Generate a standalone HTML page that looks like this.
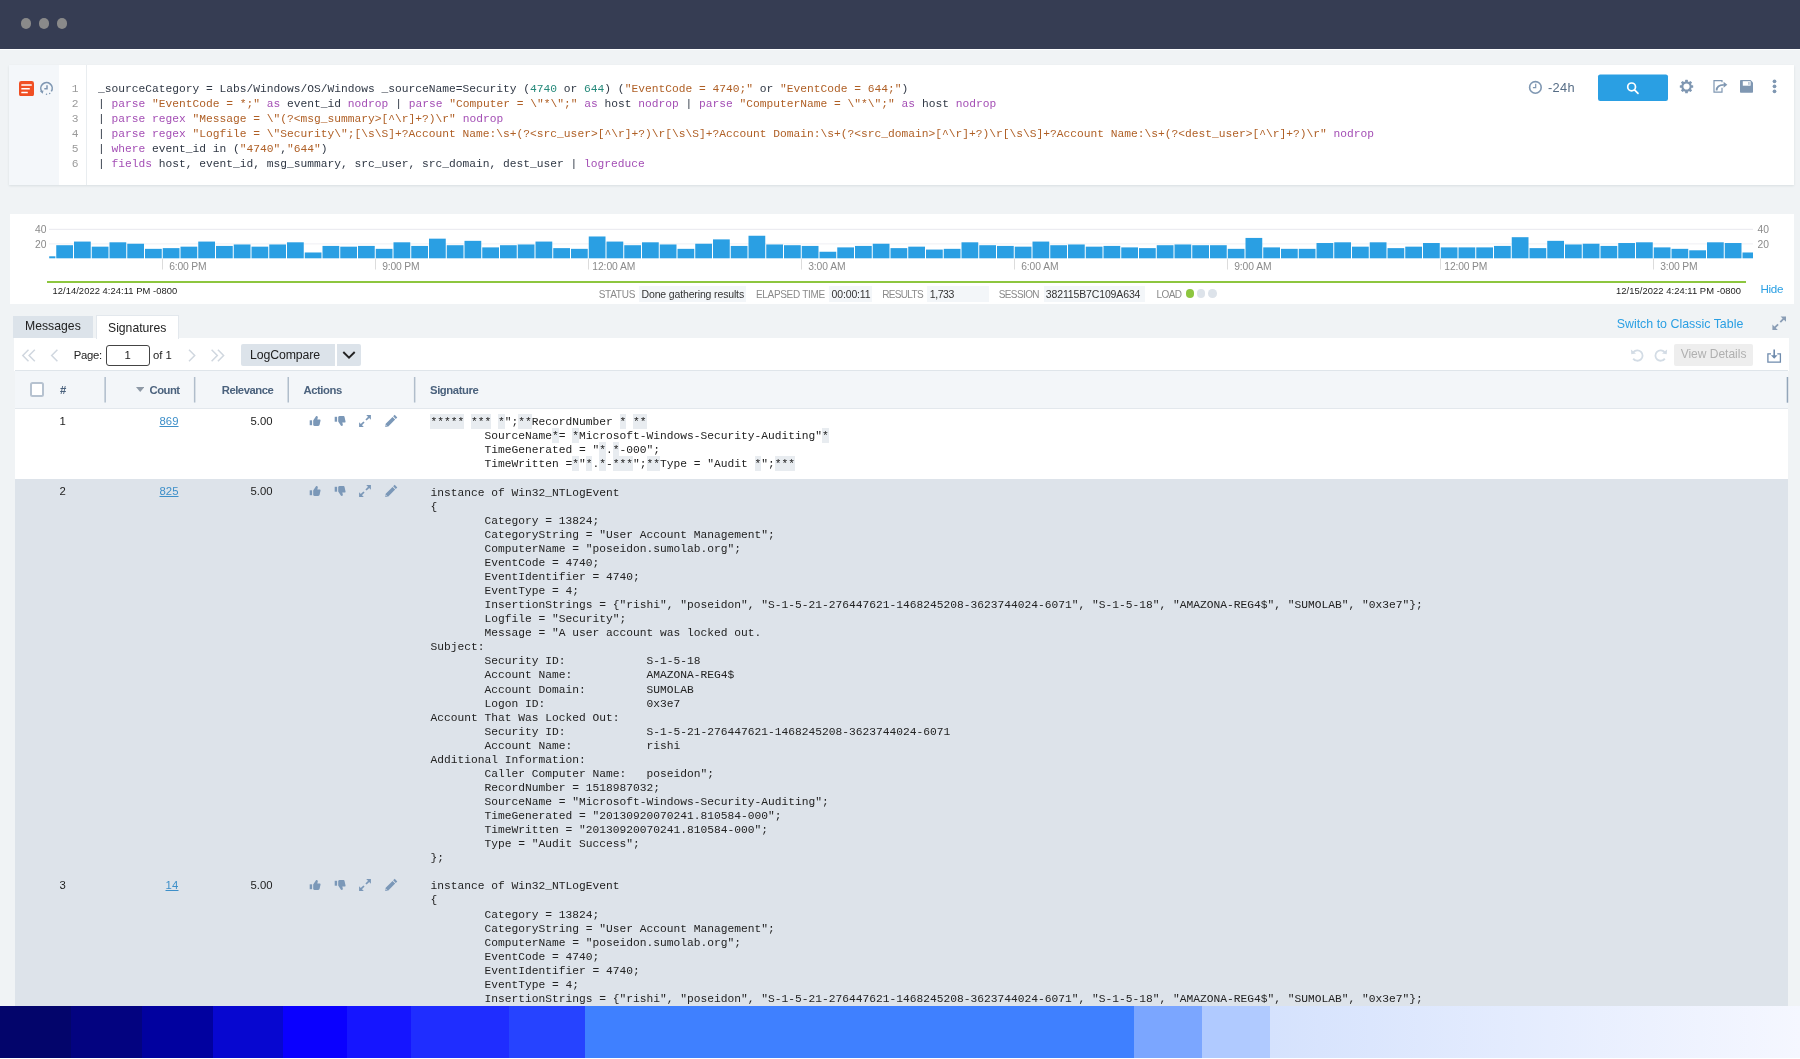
<!DOCTYPE html>
<html lang="en"><head><meta charset="utf-8"><title>Sumo Logic - LogReduce Signatures</title>
<style>
*{box-sizing:border-box}
html,body{margin:0;padding:0}
body{width:1800px;height:1059px;overflow:hidden;background:#f0f3f5;font-family:"Liberation Sans", sans-serif;position:relative;will-change:transform}
.abs{position:absolute}
.t{position:absolute;white-space:pre;line-height:1;}
#top{left:0;top:0;width:1800px;height:48.6px;background:#363d53}
#topl{left:0;top:48.6px;width:1800px;height:1.5px;background:#fdfefe}
.dot{position:absolute;width:10.4px;height:10.4px;border-radius:50%;background:#8a8a8a;top:18.3px}
#qp{left:9.3px;top:65.3px;width:1784.4px;height:119.4px;background:#fff;box-shadow:0 1px 2px rgba(60,80,100,.12)}
#qg{left:0;top:0;width:49.7px;height:100%;background:#f4f7fa}
#qline{left:76.8px;top:0;width:1px;height:100%;background:#e9edf0}
#qcode{left:0;top:16.5px;width:1500px;font-family:"Liberation Mono", monospace;font-size:11.25px;line-height:15px;color:#303845}
.ql{height:15px;padding-left:88.7px;position:relative;white-space:pre}
.ln{position:absolute;left:40px;width:29.2px;text-align:right;color:#9a9a9a}
.k{color:#a44fb5} .s{color:#af5f25} .n{color:#25897a}
#cp{left:10px;top:214px;width:1783.5px;height:90.2px;background:#fff}
.sv{position:absolute;top:286px;height:16.2px;background:#f3f6f9}
.ld{position:absolute;top:289.2px;width:8.6px;height:8.6px;border-radius:50%}
#tab1b{left:13px;top:316px;width:80px;height:22px;background:#dce3ea}
#tab2b{left:96.2px;top:315px;width:82.4px;height:24px;background:#fff;border:1px solid #e3e8ed;border-bottom:none}
#tb{left:13.7px;top:338px;width:1775.3px;height:32.5px;background:#fff}
#th{left:14.8px;top:370.2px;width:1773.4px;height:38.8px;background:#f3f6f9;border-top:1px solid #dfe5ea;border-bottom:1px solid #e3e8ed}
.sep{position:absolute;top:377px;width:1.4px;height:25.5px;background:#b2bfcd}
#r1{left:14.8px;top:409px;width:1773.4px;height:69.7px;background:#fff}
#r2{left:14.8px;top:478.7px;width:1773.4px;height:527.5px;background:#dde3ea}
.sig{position:absolute;left:430.4px;margin:0;font-family:"Liberation Mono", monospace;font-size:11.25px;line-height:14.0625px;color:#222;tab-size:8;white-space:pre}
.w{background:#e8ecf0;padding:1.6px 0 0.8px}
#pin{left:105.5px;top:345px;width:44.5px;height:20.8px;border:1px solid #444;border-radius:3px;background:#fff}
#lcb{left:241px;top:344.2px;width:93.5px;height:21.8px;background:#dce3ea;border-radius:2px 0 0 2px}
#lcd{left:337px;top:344.2px;width:23.8px;height:21.8px;background:#dce3ea;border-radius:0 2px 2px 0}
#vdb{left:1674px;top:344px;width:79.3px;height:22px;background:#eeeeee;border-radius:2px}
#cb{left:30px;top:382.4px;width:14.4px;height:14.6px;border:2px solid #b6c2d0;border-radius:2.5px;background:#fff}
#sb{left:1598px;top:74.7px;width:70px;height:26px;background:#2a9fe3;border-radius:2px}
.strip{position:absolute;top:1006px;height:52px}
</style></head>
<body>
<div id="top" class="abs"><div class="dot" style="left:20.9px"></div><div class="dot" style="left:38.7px"></div><div class="dot" style="left:56.5px"></div></div>
<div id="topl" class="abs"></div>
<div id="qp" class="abs"><div id="qg" class="abs"></div><div id="qline" class="abs"></div>
<div id="qcode" class="abs">
<div class="ql"><span class="ln">1</span>_sourceCategory = Labs/Windows/OS/Windows _sourceName=Security (<span class="n">4740</span> or <span class="n">644</span>) (<span class="s">&quot;EventCode = 4740;&quot;</span> or <span class="s">&quot;EventCode = 644;&quot;</span>)</div>
<div class="ql"><span class="ln">2</span>| <span class="k">parse</span> <span class="s">&quot;EventCode = *;&quot;</span> <span class="k">as</span> event_id <span class="k">nodrop</span> | <span class="k">parse</span> <span class="s">&quot;Computer = \&quot;*\&quot;;&quot;</span> <span class="k">as</span> host <span class="k">nodrop</span> | <span class="k">parse</span> <span class="s">&quot;ComputerName = \&quot;*\&quot;;&quot;</span> <span class="k">as</span> host <span class="k">nodrop</span></div>
<div class="ql"><span class="ln">3</span>| <span class="k">parse</span> <span class="k">regex</span> <span class="s">&quot;Message = \&quot;(?&lt;msg_summary&gt;[^\r]+?)\r&quot;</span> <span class="k">nodrop</span></div>
<div class="ql"><span class="ln">4</span>| <span class="k">parse</span> <span class="k">regex</span> <span class="s">&quot;Logfile = \&quot;Security\&quot;;[\s\S]+?Account Name:\s+(?&lt;src_user&gt;[^\r]+?)\r[\s\S]+?Account Domain:\s+(?&lt;src_domain&gt;[^\r]+?)\r[\s\S]+?Account Name:\s+(?&lt;dest_user&gt;[^\r]+?)\r&quot;</span> <span class="k">nodrop</span></div>
<div class="ql"><span class="ln">5</span>| <span class="k">where</span> event_id in (<span class="s">&quot;4740&quot;</span>,<span class="s">&quot;644&quot;</span>)</div>
<div class="ql"><span class="ln">6</span>| <span class="k">fields</span> host, event_id, msg_summary, src_user, src_domain, dest_user | <span class="k">logreduce</span></div>
</div></div>
<svg class="abs" style="left:1590px;top:70px" width="90" height="36" viewBox="1590 70 90 36"><rect x="1598" y="74.4" width="70" height="26.5" rx="2.2" fill="#2a9fe3"/></svg>
<div id="cp" class="abs"></div>
<svg class="abs" style="left:0;top:0" width="1800" height="320" viewBox="0 0 1800 320"><rect x="49" y="228.8" width="1704" height="1" fill="#e8e8ee"/><rect x="49" y="243.4" width="1704" height="1" fill="#efeff3"/><rect x="49.2" y="256.30" width="6.2" height="2" fill="#2a9fe3"/><rect x="56.25" y="245.21" width="16.75" height="13.10" fill="#2a9fe3"/><rect x="74.00" y="241.57" width="16.75" height="16.73" fill="#2a9fe3"/><rect x="91.75" y="246.66" width="16.75" height="11.64" fill="#2a9fe3"/><rect x="109.50" y="242.30" width="16.75" height="16.01" fill="#2a9fe3"/><rect x="127.25" y="243.75" width="16.75" height="14.55" fill="#2a9fe3"/><rect x="145.00" y="248.84" width="16.75" height="9.46" fill="#2a9fe3"/><rect x="162.75" y="248.12" width="16.75" height="10.19" fill="#2a9fe3"/><rect x="180.50" y="246.66" width="16.75" height="11.64" fill="#2a9fe3"/><rect x="198.25" y="241.57" width="16.75" height="16.73" fill="#2a9fe3"/><rect x="216.00" y="245.93" width="16.75" height="12.37" fill="#2a9fe3"/><rect x="233.75" y="244.48" width="16.75" height="13.82" fill="#2a9fe3"/><rect x="251.50" y="246.66" width="16.75" height="11.64" fill="#2a9fe3"/><rect x="269.25" y="244.48" width="16.75" height="13.82" fill="#2a9fe3"/><rect x="287.00" y="242.30" width="16.75" height="16.01" fill="#2a9fe3"/><rect x="304.75" y="252.48" width="16.75" height="5.82" fill="#2a9fe3"/><rect x="322.50" y="245.93" width="16.75" height="12.37" fill="#2a9fe3"/><rect x="340.25" y="246.66" width="16.75" height="11.64" fill="#2a9fe3"/><rect x="358.00" y="245.93" width="16.75" height="12.37" fill="#2a9fe3"/><rect x="375.75" y="248.84" width="16.75" height="9.46" fill="#2a9fe3"/><rect x="393.50" y="242.30" width="16.75" height="16.01" fill="#2a9fe3"/><rect x="411.25" y="245.93" width="16.75" height="12.37" fill="#2a9fe3"/><rect x="429.00" y="238.66" width="16.75" height="19.64" fill="#2a9fe3"/><rect x="446.75" y="245.21" width="16.75" height="13.10" fill="#2a9fe3"/><rect x="464.50" y="240.84" width="16.75" height="17.46" fill="#2a9fe3"/><rect x="482.25" y="247.39" width="16.75" height="10.91" fill="#2a9fe3"/><rect x="500.00" y="245.21" width="16.75" height="13.10" fill="#2a9fe3"/><rect x="517.75" y="244.48" width="16.75" height="13.82" fill="#2a9fe3"/><rect x="535.50" y="241.57" width="16.75" height="16.73" fill="#2a9fe3"/><rect x="553.25" y="248.12" width="16.75" height="10.19" fill="#2a9fe3"/><rect x="571.00" y="248.84" width="16.75" height="9.46" fill="#2a9fe3"/><rect x="588.75" y="236.48" width="16.75" height="21.83" fill="#2a9fe3"/><rect x="606.50" y="241.57" width="16.75" height="16.73" fill="#2a9fe3"/><rect x="624.25" y="245.21" width="16.75" height="13.10" fill="#2a9fe3"/><rect x="642.00" y="242.30" width="16.75" height="16.01" fill="#2a9fe3"/><rect x="659.75" y="244.48" width="16.75" height="13.82" fill="#2a9fe3"/><rect x="677.50" y="248.84" width="16.75" height="9.46" fill="#2a9fe3"/><rect x="695.25" y="243.75" width="16.75" height="14.55" fill="#2a9fe3"/><rect x="713.00" y="239.39" width="16.75" height="18.91" fill="#2a9fe3"/><rect x="730.75" y="245.93" width="16.75" height="12.37" fill="#2a9fe3"/><rect x="748.50" y="235.75" width="16.75" height="22.55" fill="#2a9fe3"/><rect x="766.25" y="244.48" width="16.75" height="13.82" fill="#2a9fe3"/><rect x="784.00" y="245.21" width="16.75" height="13.10" fill="#2a9fe3"/><rect x="801.75" y="245.93" width="16.75" height="12.37" fill="#2a9fe3"/><rect x="819.50" y="251.75" width="16.75" height="6.55" fill="#2a9fe3"/><rect x="837.25" y="247.39" width="16.75" height="10.91" fill="#2a9fe3"/><rect x="855.00" y="245.93" width="16.75" height="12.37" fill="#2a9fe3"/><rect x="872.75" y="243.75" width="16.75" height="14.55" fill="#2a9fe3"/><rect x="890.50" y="248.12" width="16.75" height="10.19" fill="#2a9fe3"/><rect x="908.25" y="246.66" width="16.75" height="11.64" fill="#2a9fe3"/><rect x="926.00" y="249.57" width="16.75" height="8.73" fill="#2a9fe3"/><rect x="943.75" y="248.84" width="16.75" height="9.46" fill="#2a9fe3"/><rect x="961.50" y="242.30" width="16.75" height="16.01" fill="#2a9fe3"/><rect x="979.25" y="245.21" width="16.75" height="13.10" fill="#2a9fe3"/><rect x="997.00" y="245.93" width="16.75" height="12.37" fill="#2a9fe3"/><rect x="1014.75" y="246.66" width="16.75" height="11.64" fill="#2a9fe3"/><rect x="1032.50" y="241.57" width="16.75" height="16.73" fill="#2a9fe3"/><rect x="1050.25" y="245.21" width="16.75" height="13.10" fill="#2a9fe3"/><rect x="1068.00" y="244.48" width="16.75" height="13.82" fill="#2a9fe3"/><rect x="1085.75" y="246.66" width="16.75" height="11.64" fill="#2a9fe3"/><rect x="1103.50" y="245.93" width="16.75" height="12.37" fill="#2a9fe3"/><rect x="1121.25" y="247.39" width="16.75" height="10.91" fill="#2a9fe3"/><rect x="1139.00" y="248.12" width="16.75" height="10.19" fill="#2a9fe3"/><rect x="1156.75" y="245.21" width="16.75" height="13.10" fill="#2a9fe3"/><rect x="1174.50" y="244.48" width="16.75" height="13.82" fill="#2a9fe3"/><rect x="1192.25" y="245.21" width="16.75" height="13.10" fill="#2a9fe3"/><rect x="1210.00" y="245.21" width="16.75" height="13.10" fill="#2a9fe3"/><rect x="1227.75" y="248.84" width="16.75" height="9.46" fill="#2a9fe3"/><rect x="1245.50" y="237.93" width="16.75" height="20.37" fill="#2a9fe3"/><rect x="1263.25" y="247.39" width="16.75" height="10.91" fill="#2a9fe3"/><rect x="1281.00" y="248.84" width="16.75" height="9.46" fill="#2a9fe3"/><rect x="1298.75" y="248.84" width="16.75" height="9.46" fill="#2a9fe3"/><rect x="1316.50" y="243.02" width="16.75" height="15.28" fill="#2a9fe3"/><rect x="1334.25" y="242.30" width="16.75" height="16.01" fill="#2a9fe3"/><rect x="1352.00" y="246.66" width="16.75" height="11.64" fill="#2a9fe3"/><rect x="1369.75" y="242.30" width="16.75" height="16.01" fill="#2a9fe3"/><rect x="1387.50" y="248.12" width="16.75" height="10.19" fill="#2a9fe3"/><rect x="1405.25" y="246.66" width="16.75" height="11.64" fill="#2a9fe3"/><rect x="1423.00" y="243.02" width="16.75" height="15.28" fill="#2a9fe3"/><rect x="1440.75" y="247.39" width="16.75" height="10.91" fill="#2a9fe3"/><rect x="1458.50" y="247.39" width="16.75" height="10.91" fill="#2a9fe3"/><rect x="1476.25" y="247.39" width="16.75" height="10.91" fill="#2a9fe3"/><rect x="1494.00" y="245.93" width="16.75" height="12.37" fill="#2a9fe3"/><rect x="1511.75" y="237.20" width="16.75" height="21.10" fill="#2a9fe3"/><rect x="1529.50" y="248.12" width="16.75" height="10.19" fill="#2a9fe3"/><rect x="1547.25" y="240.84" width="16.75" height="17.46" fill="#2a9fe3"/><rect x="1565.00" y="244.48" width="16.75" height="13.82" fill="#2a9fe3"/><rect x="1582.75" y="243.75" width="16.75" height="14.55" fill="#2a9fe3"/><rect x="1600.50" y="245.93" width="16.75" height="12.37" fill="#2a9fe3"/><rect x="1618.25" y="243.02" width="16.75" height="15.28" fill="#2a9fe3"/><rect x="1636.00" y="242.30" width="16.75" height="16.01" fill="#2a9fe3"/><rect x="1653.75" y="247.39" width="16.75" height="10.91" fill="#2a9fe3"/><rect x="1671.50" y="248.84" width="16.75" height="9.46" fill="#2a9fe3"/><rect x="1689.25" y="250.30" width="16.75" height="8.00" fill="#2a9fe3"/><rect x="1707.00" y="242.30" width="16.75" height="16.01" fill="#2a9fe3"/><rect x="1724.75" y="243.02" width="16.75" height="15.28" fill="#2a9fe3"/><rect x="1742.50" y="252.48" width="10.50" height="5.82" fill="#2a9fe3"/><rect x="162.00" y="258.5" width="1" height="11" fill="#dcdcdc"/><rect x="375.00" y="258.5" width="1" height="11" fill="#dcdcdc"/><rect x="588.00" y="258.5" width="1" height="11" fill="#dcdcdc"/><rect x="801.00" y="258.5" width="1" height="11" fill="#dcdcdc"/><rect x="1014.00" y="258.5" width="1" height="11" fill="#dcdcdc"/><rect x="1227.00" y="258.5" width="1" height="11" fill="#dcdcdc"/><rect x="1440.00" y="258.5" width="1" height="11" fill="#dcdcdc"/><rect x="1653.00" y="258.5" width="1" height="11" fill="#dcdcdc"/><rect x="47" y="281" width="1699" height="2" fill="#8dc63f"/></svg>
<div class="sv" style="left:639.2px;width:106.8px"></div>
<div class="sv" style="left:829.2px;width:43.1px"></div>
<div class="sv" style="left:927.4px;width:61.6px"></div>
<div class="sv" style="left:1043.5px;width:101.1px"></div>
<div class="ld" style="left:1185.6px;background:#8dc63f"></div>
<div class="ld" style="left:1196.8px;background:#dde3ea"></div>
<div class="ld" style="left:1208px;background:#dde3ea"></div>
<div id="tab1b" class="abs"></div><div id="tb" class="abs"></div><div id="tab2b" class="abs"></div>
<div id="th" class="abs"></div>
<svg class="abs" style="left:0;top:370px" width="1800" height="40" viewBox="0 370 1800 40"><g fill="#b0bdcb"><rect x="104.4" y="377" width="1.5" height="25.5"/><rect x="193.9" y="377" width="1.5" height="25.5"/><rect x="287.5" y="377" width="1.5" height="25.5"/><rect x="413.9" y="377" width="1.5" height="25.5"/></g><rect x="1786.7" y="377" width="1.5" height="25.7" fill="#93a5b9"/></svg>
<div id="r1" class="abs"></div><div id="r2" class="abs"></div>
<div id="pin" class="abs"></div><div id="lcb" class="abs"></div><div id="lcd" class="abs"></div><div id="vdb" class="abs"></div><div id="cb" class="abs"></div>
<pre id="sg1" class="sig" style="top:414.90px"><span class="w">*****</span> <span class="w">***</span> <span class="w">*</span>&quot;;<span class="w">**</span>RecordNumber <span class="w">*</span> <span class="w">**</span>
	SourceName<span class="w">*</span>= <span class="w">*</span>Microsoft-Windows-Security-Auditing&quot;<span class="w">*</span>
	TimeGenerated = &quot;<span class="w">*</span>.<span class="w">*</span>-000&quot;;
	TimeWritten =<span class="w">*</span>&quot;<span class="w">*</span>.<span class="w">*</span>-<span class="w">***</span>&quot;;<span class="w">**</span>Type = &quot;Audit <span class="w">*</span>&quot;;<span class="w">***</span></pre>
<pre id="sg2" class="sig" style="top:485.65px">instance of Win32_NTLogEvent
{
	Category = 13824;
	CategoryString = &quot;User Account Management&quot;;
	ComputerName = &quot;poseidon.sumolab.org&quot;;
	EventCode = 4740;
	EventIdentifier = 4740;
	EventType = 4;
	InsertionStrings = {&quot;rishi&quot;, &quot;poseidon&quot;, &quot;S-1-5-21-276447621-1468245208-3623744024-6071&quot;, &quot;S-1-5-18&quot;, &quot;AMAZONA-REG4$&quot;, &quot;SUMOLAB&quot;, &quot;0x3e7&quot;};
	Logfile = &quot;Security&quot;;
	Message = &quot;A user account was locked out.
Subject:
	Security ID:		S-1-5-18
	Account Name:		AMAZONA-REG4$
	Account Domain:		SUMOLAB
	Logon ID:		0x3e7
Account That Was Locked Out:
	Security ID:		S-1-5-21-276447621-1468245208-3623744024-6071
	Account Name:		rishi
Additional Information:
	Caller Computer Name:	poseidon&quot;;
	RecordNumber = 1518987032;
	SourceName = &quot;Microsoft-Windows-Security-Auditing&quot;;
	TimeGenerated = &quot;20130920070241.810584-000&quot;;
	TimeWritten = &quot;20130920070241.810584-000&quot;;
	Type = &quot;Audit Success&quot;;
};</pre>
<pre id="sg3" class="sig" style="top:879.40px">instance of Win32_NTLogEvent
{
	Category = 13824;
	CategoryString = &quot;User Account Management&quot;;
	ComputerName = &quot;poseidon.sumolab.org&quot;;
	EventCode = 4740;
	EventIdentifier = 4740;
	EventType = 4;
	InsertionStrings = {&quot;rishi&quot;, &quot;poseidon&quot;, &quot;S-1-5-21-276447621-1468245208-3623744024-6071&quot;, &quot;S-1-5-18&quot;, &quot;AMAZONA-REG4$&quot;, &quot;SUMOLAB&quot;, &quot;0x3e7&quot;};</pre>
<svg class="abs" style="left:307.50px;top:413.80px" width="14" height="14" viewBox="0 0 14 14" fill="#7b98b8"><rect x="1.7" y="6.3" width="2.4" height="4.9" /><path d="M5.2 6.6 L8 2.2 C9.2 1.7 10 2.6 9.8 3.6 L9.3 5.5 L11.6 5.5 C12.4 5.5 12.7 6.1 12.5 6.8 L11.6 10.8 C11.4 11.6 11 11.9 10.2 11.9 L6.4 11.9 L5.2 11.3 Z"/></svg><svg class="abs" style="left:333.20px;top:413.80px" width="14" height="14" viewBox="0 0 14 14" fill="#7b98b8"><g transform="translate(0,14) scale(1,-1)"><rect x="1.7" y="6.3" width="2.4" height="4.9" /><path d="M5.2 6.6 L8 2.2 C9.2 1.7 10 2.6 9.8 3.6 L9.3 5.5 L11.6 5.5 C12.4 5.5 12.7 6.1 12.5 6.8 L11.6 10.8 C11.4 11.6 11 11.9 10.2 11.9 L6.4 11.9 L5.2 11.3 Z"/></g></svg><svg class="abs" style="left:358.30px;top:413.80px" width="14" height="14" viewBox="0 0 14 14" fill="#7b98b8"><path d="M8.2 1.1 L12.9 1.1 L12.9 5.8 Z M1.1 8.2 L1.1 12.9 L5.8 12.9 Z"/><path d="M11.2 2.8 L8 6 M6 8 L2.8 11.2" stroke="#7b98b8" stroke-width="1.7" fill="none"/></svg><svg class="abs" style="left:383.60px;top:413.80px" width="14" height="14" viewBox="0 0 14 14" fill="#7b98b8"><path d="M10.7 0.8 L13.3 3.4 L11.75 4.95 L9.15 2.35 Z M8.55 2.95 L11.15 5.55 L4.3 12.4 L1.2 12.9 L1.7 9.8 Z"/><path d="M1.9 11.2 L2.9 12.2" stroke="#fff" stroke-width="0.7"/></svg>
<svg class="abs" style="left:307.50px;top:484.10px" width="14" height="14" viewBox="0 0 14 14" fill="#7b98b8"><rect x="1.7" y="6.3" width="2.4" height="4.9" /><path d="M5.2 6.6 L8 2.2 C9.2 1.7 10 2.6 9.8 3.6 L9.3 5.5 L11.6 5.5 C12.4 5.5 12.7 6.1 12.5 6.8 L11.6 10.8 C11.4 11.6 11 11.9 10.2 11.9 L6.4 11.9 L5.2 11.3 Z"/></svg><svg class="abs" style="left:333.20px;top:484.10px" width="14" height="14" viewBox="0 0 14 14" fill="#7b98b8"><g transform="translate(0,14) scale(1,-1)"><rect x="1.7" y="6.3" width="2.4" height="4.9" /><path d="M5.2 6.6 L8 2.2 C9.2 1.7 10 2.6 9.8 3.6 L9.3 5.5 L11.6 5.5 C12.4 5.5 12.7 6.1 12.5 6.8 L11.6 10.8 C11.4 11.6 11 11.9 10.2 11.9 L6.4 11.9 L5.2 11.3 Z"/></g></svg><svg class="abs" style="left:358.30px;top:484.10px" width="14" height="14" viewBox="0 0 14 14" fill="#7b98b8"><path d="M8.2 1.1 L12.9 1.1 L12.9 5.8 Z M1.1 8.2 L1.1 12.9 L5.8 12.9 Z"/><path d="M11.2 2.8 L8 6 M6 8 L2.8 11.2" stroke="#7b98b8" stroke-width="1.7" fill="none"/></svg><svg class="abs" style="left:383.60px;top:484.10px" width="14" height="14" viewBox="0 0 14 14" fill="#7b98b8"><path d="M10.7 0.8 L13.3 3.4 L11.75 4.95 L9.15 2.35 Z M8.55 2.95 L11.15 5.55 L4.3 12.4 L1.2 12.9 L1.7 9.8 Z"/><path d="M1.9 11.2 L2.9 12.2" stroke="#fff" stroke-width="0.7"/></svg>
<svg class="abs" style="left:307.50px;top:877.90px" width="14" height="14" viewBox="0 0 14 14" fill="#7b98b8"><rect x="1.7" y="6.3" width="2.4" height="4.9" /><path d="M5.2 6.6 L8 2.2 C9.2 1.7 10 2.6 9.8 3.6 L9.3 5.5 L11.6 5.5 C12.4 5.5 12.7 6.1 12.5 6.8 L11.6 10.8 C11.4 11.6 11 11.9 10.2 11.9 L6.4 11.9 L5.2 11.3 Z"/></svg><svg class="abs" style="left:333.20px;top:877.90px" width="14" height="14" viewBox="0 0 14 14" fill="#7b98b8"><g transform="translate(0,14) scale(1,-1)"><rect x="1.7" y="6.3" width="2.4" height="4.9" /><path d="M5.2 6.6 L8 2.2 C9.2 1.7 10 2.6 9.8 3.6 L9.3 5.5 L11.6 5.5 C12.4 5.5 12.7 6.1 12.5 6.8 L11.6 10.8 C11.4 11.6 11 11.9 10.2 11.9 L6.4 11.9 L5.2 11.3 Z"/></g></svg><svg class="abs" style="left:358.30px;top:877.90px" width="14" height="14" viewBox="0 0 14 14" fill="#7b98b8"><path d="M8.2 1.1 L12.9 1.1 L12.9 5.8 Z M1.1 8.2 L1.1 12.9 L5.8 12.9 Z"/><path d="M11.2 2.8 L8 6 M6 8 L2.8 11.2" stroke="#7b98b8" stroke-width="1.7" fill="none"/></svg><svg class="abs" style="left:383.60px;top:877.90px" width="14" height="14" viewBox="0 0 14 14" fill="#7b98b8"><path d="M10.7 0.8 L13.3 3.4 L11.75 4.95 L9.15 2.35 Z M8.55 2.95 L11.15 5.55 L4.3 12.4 L1.2 12.9 L1.7 9.8 Z"/><path d="M1.9 11.2 L2.9 12.2" stroke="#fff" stroke-width="0.7"/></svg>
<svg class="abs" style="left:19.2px;top:80.9px" width="15" height="15.3" viewBox="0 0 15 15.3"><rect width="15" height="15.3" rx="2.3" fill="#f04f23"/><rect x="2.3" y="3.2" width="10.5" height="1.5" rx="0.3" fill="#fff"/><rect x="2.3" y="7" width="8.5" height="1.5" rx="0.3" fill="#fff"/><rect x="2.3" y="10.7" width="6.5" height="1.5" rx="0.3" fill="#fff"/></svg>
<svg class="abs" style="left:39px;top:81px" width="15" height="15" viewBox="0 0 15 15" fill="none" stroke="#7f97b2" stroke-width="1.6"><path d="M2.9 10.7 A5.7 5.7 0 1 1 12.3 10.4" /><path d="M8 4.3 L8 7.7 L5.3 7.7" stroke-width="1.5"/><path d="M0.9 10.3 L4.5 9.5 L3.7 12.8 Z" fill="#7f97b2" stroke="none"/><circle cx="7.5" cy="13.2" r="0.75" fill="#7f97b2" stroke="none"/><circle cx="10.7" cy="12.5" r="0.75" fill="#7f97b2" stroke="none"/></svg>
<svg class="abs" style="left:1528px;top:79.8px" width="15" height="15" viewBox="0 0 15 15" fill="none" stroke="#7f97b2" stroke-width="1.6"><circle cx="7.4" cy="7.4" r="5.8"/><path d="M7.7 3.8 L7.7 7.7 L4.9 7.7" stroke-width="1.2"/></svg>
<svg class="abs" style="left:1625.3px;top:79.6px" width="16" height="16" viewBox="0 0 16 16" fill="none" stroke="#fff" stroke-width="1.7"><circle cx="6.6" cy="6.9" r="3.9"/><path d="M9.5 9.9 L13 13.4" stroke-linecap="round"/></svg>
<svg class="abs" style="left:1679.3px;top:79px" width="15" height="15" viewBox="-7.5 -7.5 15 15"><g fill="#7f97b2"><rect x="-1.35" y="-6.7" width="2.7" height="2.6" rx="0.5" transform="rotate(0)"/><rect x="-1.35" y="-6.7" width="2.7" height="2.6" rx="0.5" transform="rotate(45)"/><rect x="-1.35" y="-6.7" width="2.7" height="2.6" rx="0.5" transform="rotate(90)"/><rect x="-1.35" y="-6.7" width="2.7" height="2.6" rx="0.5" transform="rotate(135)"/><rect x="-1.35" y="-6.7" width="2.7" height="2.6" rx="0.5" transform="rotate(180)"/><rect x="-1.35" y="-6.7" width="2.7" height="2.6" rx="0.5" transform="rotate(225)"/><rect x="-1.35" y="-6.7" width="2.7" height="2.6" rx="0.5" transform="rotate(270)"/><rect x="-1.35" y="-6.7" width="2.7" height="2.6" rx="0.5" transform="rotate(315)"/></g><circle r="4.15" fill="none" stroke="#7f97b2" stroke-width="2.1"/></svg>
<svg class="abs" style="left:1711.5px;top:79px" width="16" height="15" viewBox="0 0 16 15" fill="none" stroke="#7f97b2" stroke-width="1.2"><path d="M10 3.2 L10 1.7 L2 1.7 L2 13.2 L10 13.2 L10 8.8"/><path d="M4.6 11.4 C4.6 7.6 7 5.8 11.8 5.8" stroke-width="1.8"/><path d="M11.6 2.8 L15.3 5.7 L11.6 8.8 Z" fill="#7f97b2" stroke="none"/></svg>
<svg class="abs" style="left:1740.4px;top:80px" width="13" height="12.8" viewBox="0 0 13 12.8"><path d="M0 0.8 Q0 0 0.8 0 L10.6 0 L13 2.5 L13 12 Q13 12.8 12.2 12.8 L0.8 12.8 Q0 12.8 0 12 Z" fill="#7f97b2"/><rect x="2.8" y="1.2" width="7.8" height="4.5" fill="#fff"/><rect x="8.5" y="2" width="0.9" height="2.8" fill="#7f97b2"/></svg>
<svg class="abs" style="left:1770.6px;top:78px" width="7" height="17" viewBox="0 0 7 17" fill="#7f97b2"><circle cx="3.5" cy="3.3" r="1.85"/><circle cx="3.5" cy="8.3" r="1.85"/><circle cx="3.5" cy="13.3" r="1.85"/></svg>
<svg class="abs" style="left:1771.6px;top:316.4px" width="14.4" height="14.4" viewBox="0 0 14.4 14.4" fill="#8a9db5"><path d="M8.6 0.4 L14 0.4 L14 5.8 Z M0.4 8.6 L0.4 14 L5.8 14 Z"/><path d="M12.2 2.2 L8.3 6.1 M6.1 8.3 L2.2 12.2" stroke="#8a9db5" stroke-width="1.8" fill="none"/></svg>
<svg class="abs" style="left:20px;top:348px" width="210" height="15" viewBox="0 0 210 15" fill="none" stroke="#d0d7df" stroke-width="1.5"><path d="M8.5 1.8 L2.8 7.5 L8.5 13.2 M14.8 1.8 L9.1 7.5 L14.8 13.2"/><path d="M37.4 1.8 L31.7 7.5 L37.4 13.2"/><path d="M169 1.8 L174.7 7.5 L169 13.2"/><path d="M191.6 1.8 L197.3 7.5 L191.6 13.2 M197.9 1.8 L203.6 7.5 L197.9 13.2"/></svg>
<svg class="abs" style="left:342px;top:350px" width="14" height="10" viewBox="0 0 14 10" fill="none" stroke="#222" stroke-width="1.9"><path d="M1.3 2 L7 7.7 L12.7 2"/></svg>
<svg class="abs" style="left:1630px;top:348px" width="15" height="15" viewBox="0 0 15 15" fill="none" stroke="#d3dce5" stroke-width="1.8"><path d="M3.4 4.2 A5.2 5.2 0 1 1 3.2 10.6"/><path d="M0.9 1.4 L1.3 6.2 L6 5.4 Z" fill="#d3dce5" stroke="none"/></svg>
<svg class="abs" style="left:1652.5px;top:348px" width="15" height="15" viewBox="0 0 15 15" fill="none" stroke="#d3dce5" stroke-width="1.8"><path d="M11.6 4.2 A5.2 5.2 0 1 0 11.8 10.6"/><path d="M14.1 1.4 L13.7 6.2 L9 5.4 Z" fill="#d3dce5" stroke="none"/></svg>
<svg class="abs" style="left:1767px;top:348.5px" width="14.5" height="14" viewBox="0 0 14.5 14" fill="none" stroke="#6f8bad" stroke-width="1.3"><path d="M4 4.8 L0.9 4.8 L0.9 13.1 L13.4 13.1 L13.4 4.8 L10.3 4.8"/><path d="M7.2 0.4 L7.2 8.4" stroke-width="1.6"/><path d="M3.9 6.2 L7.2 9.8 L10.5 6.2 Z" fill="#6f8bad" stroke="none"/></svg>
<svg class="abs" style="left:136px;top:387.3px" width="8.4" height="5" viewBox="0 0 8.4 5"><path d="M0 0 L8.4 0 L4.2 5 Z" fill="#8e99a6"/></svg>
<span id="t24h" class="t" style="left:1548.00px;top:82.16px;font-size:12.8px;font-weight:400;color:#566d86;letter-spacing:0.344px;">-24h</span>
<span id="ax40l" class="t" style="left:35.00px;top:225.08px;font-size:10.3px;font-weight:400;color:#8a8a8a;letter-spacing:-0.084px;">40</span>
<span id="ax20l" class="t" style="left:35.00px;top:239.88px;font-size:10.3px;font-weight:400;color:#8a8a8a;letter-spacing:-0.084px;">20</span>
<span id="ax40r" class="t" style="left:1757.50px;top:225.08px;font-size:10.3px;font-weight:400;color:#8a8a8a;letter-spacing:-0.084px;">40</span>
<span id="ax20r" class="t" style="left:1757.50px;top:239.88px;font-size:10.3px;font-weight:400;color:#8a8a8a;letter-spacing:-0.084px;">20</span>
<span id="tk0" class="t" style="left:169.15px;top:261.58px;font-size:10.3px;font-weight:400;color:#8a8a8a;letter-spacing:-0.151px;">6:00 PM</span>
<span id="tk1" class="t" style="left:382.15px;top:261.58px;font-size:10.3px;font-weight:400;color:#8a8a8a;letter-spacing:-0.151px;">9:00 PM</span>
<span id="tk2" class="t" style="left:592.30px;top:261.58px;font-size:10.3px;font-weight:400;color:#8a8a8a;letter-spacing:-0.064px;">12:00 AM</span>
<span id="tk3" class="t" style="left:808.15px;top:261.58px;font-size:10.3px;font-weight:400;color:#8a8a8a;letter-spacing:-0.069px;">3:00 AM</span>
<span id="tk4" class="t" style="left:1021.15px;top:261.58px;font-size:10.3px;font-weight:400;color:#8a8a8a;letter-spacing:-0.069px;">6:00 AM</span>
<span id="tk5" class="t" style="left:1234.15px;top:261.58px;font-size:10.3px;font-weight:400;color:#8a8a8a;letter-spacing:-0.069px;">9:00 AM</span>
<span id="tk6" class="t" style="left:1444.30px;top:261.58px;font-size:10.3px;font-weight:400;color:#8a8a8a;letter-spacing:-0.135px;">12:00 PM</span>
<span id="tk7" class="t" style="left:1660.15px;top:261.58px;font-size:10.3px;font-weight:400;color:#8a8a8a;letter-spacing:-0.151px;">3:00 PM</span>
<span id="d1" class="t" style="left:52.50px;top:286.24px;font-size:9.4px;font-weight:400;color:#222;letter-spacing:0.050px;">12/14/2022 4:24:11 PM -0800</span>
<span id="d2" class="t" style="left:1616.00px;top:286.24px;font-size:9.4px;font-weight:400;color:#222;letter-spacing:0.061px;">12/15/2022 4:24:11 PM -0800</span>
<span id="hide" class="t" style="left:1760.50px;top:282.68px;font-size:11.6px;font-weight:400;color:#2a9fe3;letter-spacing:-0.340px;">Hide</span>
<span id="s1" class="t" style="left:598.70px;top:290.24px;font-size:10px;font-weight:400;color:#8a8a8a;letter-spacing:-0.261px;">STATUS</span>
<span id="s1v" class="t" style="left:641.50px;top:288.81px;font-size:10.5px;font-weight:400;color:#333;letter-spacing:-0.143px;">Done gathering results</span>
<span id="s2" class="t" style="left:755.90px;top:290.24px;font-size:10px;font-weight:400;color:#8a8a8a;letter-spacing:-0.302px;">ELAPSED TIME</span>
<span id="s2v" class="t" style="left:831.50px;top:288.81px;font-size:10.5px;font-weight:400;color:#333;letter-spacing:-0.137px;">00:00:11</span>
<span id="s3" class="t" style="left:882.20px;top:290.24px;font-size:10px;font-weight:400;color:#8a8a8a;letter-spacing:-0.670px;">RESULTS</span>
<span id="s3v" class="t" style="left:929.70px;top:288.81px;font-size:10.5px;font-weight:400;color:#333;letter-spacing:-0.396px;">1,733</span>
<span id="s4" class="t" style="left:998.70px;top:290.24px;font-size:10px;font-weight:400;color:#8a8a8a;letter-spacing:-0.596px;">SESSION</span>
<span id="s4v" class="t" style="left:1045.80px;top:288.81px;font-size:10.5px;font-weight:400;color:#333;letter-spacing:-0.140px;">382115B7C109A634</span>
<span id="s5" class="t" style="left:1156.60px;top:290.24px;font-size:10px;font-weight:400;color:#8a8a8a;letter-spacing:-0.584px;">LOAD</span>
<span id="tab1" class="t" style="left:25.00px;top:320.17px;font-size:12.2px;font-weight:400;color:#222;letter-spacing:0.025px;">Messages</span>
<span id="tab2" class="t" style="left:108.00px;top:321.67px;font-size:12.2px;font-weight:400;color:#222;letter-spacing:-0.002px;">Signatures</span>
<span id="sw" class="t" style="left:1616.70px;top:317.50px;font-size:12.4px;font-weight:400;color:#2a9fe3;letter-spacing:0.005px;">Switch to Classic Table</span>
<span id="pg" class="t" style="left:73.75px;top:350.18px;font-size:11.3px;font-weight:400;color:#222;letter-spacing:-0.256px;">Page:</span>
<span id="pg1" class="t" style="left:124.50px;top:350.18px;font-size:11.3px;font-weight:400;color:#222;letter-spacing:-0.297px;">1</span>
<span id="pgof" class="t" style="left:153.00px;top:350.18px;font-size:11.3px;font-weight:400;color:#222;letter-spacing:-0.023px;">of 1</span>
<span id="lc" class="t" style="left:250.00px;top:348.89px;font-size:12.3px;font-weight:400;color:#222;letter-spacing:-0.109px;">LogCompare</span>
<span id="vd" class="t" style="left:1680.70px;top:348.14px;font-size:12px;font-weight:400;color:#b0b0b0;letter-spacing:-0.009px;">View Details</span>
<span id="h0" class="t" style="left:60.00px;top:385.18px;font-size:11.3px;font-weight:700;color:#4b627d;letter-spacing:0.203px;">#</span>
<span id="h1" class="t" style="left:149.50px;top:385.18px;font-size:11.3px;font-weight:700;color:#4b627d;letter-spacing:-0.525px;">Count</span>
<span id="h2" class="t" style="left:221.75px;top:385.18px;font-size:11.3px;font-weight:700;color:#4b627d;letter-spacing:-0.490px;">Relevance</span>
<span id="h3" class="t" style="left:303.50px;top:385.18px;font-size:11.3px;font-weight:700;color:#4b627d;letter-spacing:-0.455px;">Actions</span>
<span id="h4" class="t" style="left:430.00px;top:385.18px;font-size:11.3px;font-weight:700;color:#4b627d;letter-spacing:-0.401px;">Signature</span>
<span id="rn0" class="t" style="left:59.50px;top:416.43px;font-size:11.3px;font-weight:400;color:#222;letter-spacing:-0.297px;">1</span>
<span id="rc0" class="t" style="left:159.50px;top:416.43px;font-size:11.3px;font-weight:400;color:#3d8fc9;letter-spacing:0.047px;text-decoration:underline;">869</span>
<span id="rr0" class="t" style="left:250.50px;top:416.43px;font-size:11.3px;font-weight:400;color:#222;letter-spacing:0.000px;">5.00</span>
<span id="rn1" class="t" style="left:59.50px;top:485.73px;font-size:11.3px;font-weight:400;color:#222;letter-spacing:-0.297px;">2</span>
<span id="rc1" class="t" style="left:159.50px;top:485.73px;font-size:11.3px;font-weight:400;color:#3d8fc9;letter-spacing:0.047px;text-decoration:underline;">825</span>
<span id="rr1" class="t" style="left:250.50px;top:485.73px;font-size:11.3px;font-weight:400;color:#222;letter-spacing:0.000px;">5.00</span>
<span id="rn2" class="t" style="left:59.50px;top:879.53px;font-size:11.3px;font-weight:400;color:#222;letter-spacing:-0.297px;">3</span>
<span id="rc2" class="t" style="left:165.50px;top:879.53px;font-size:11.3px;font-weight:400;color:#3d8fc9;letter-spacing:0.211px;text-decoration:underline;">14</span>
<span id="rr2" class="t" style="left:250.50px;top:879.53px;font-size:11.3px;font-weight:400;color:#222;letter-spacing:0.000px;">5.00</span>
<div class="strip" style="left:0px;width:71.20px;background:#03056b"></div><div class="strip" style="left:71.2px;width:70.80px;background:#030380"></div><div class="strip" style="left:142px;width:71.00px;background:#01019f"></div><div class="strip" style="left:213px;width:70.00px;background:#0707d0"></div><div class="strip" style="left:283px;width:64.30px;background:#0a00ff"></div><div class="strip" style="left:347.3px;width:63.70px;background:#1515ff"></div><div class="strip" style="left:411px;width:97.70px;background:#1f2dff"></div><div class="strip" style="left:508.7px;width:76.60px;background:#2643ff"></div><div class="strip" style="left:585.3px;width:548.50px;background:#3f80ff"></div><div class="strip" style="left:1133.8px;width:68.10px;background:#7ba6ff"></div><div class="strip" style="left:1201.9px;width:68.10px;background:#b0caff"></div><div class="strip" style="left:1270px;width:530px;background:linear-gradient(90deg,#d5e2fd,#f5f7ff)"></div><div class="abs" style="left:0;top:1058px;width:1800px;height:1px;background:#fff"></div>
</body></html>
